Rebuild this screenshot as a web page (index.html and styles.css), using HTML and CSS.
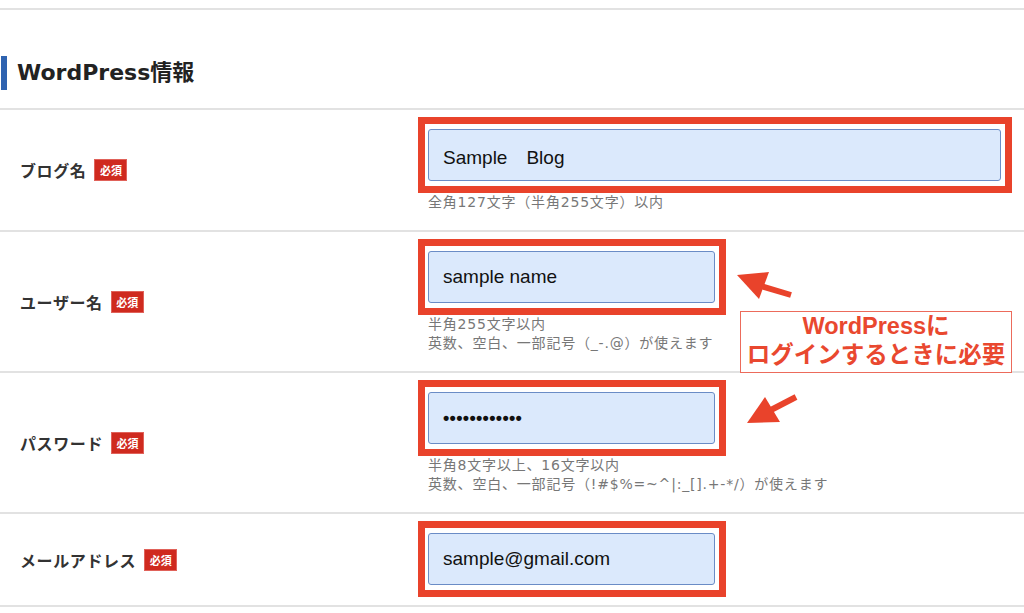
FILE: index.html
```html
<!DOCTYPE html>
<html lang="ja">
<head>
    <meta charset="UTF-8">
    <meta name="viewport" content="width=device-width, initial-scale=1.0">
    <title>WordPress情報</title>
    <link rel="stylesheet" href="styles.css">
</head>
<body>
    <div class="page">
        <div class="section-head">
            <h2>WordPress情報</h2>
        </div>

        <div class="form-table">
            <div class="row">
                <div class="label">ブログ名<span class="required">必須</span></div>
                <div class="field">
                    <div class="mark"><input class="wide" type="text" value="Sample　Blog"></div>
                    <p class="hint">全角127文字（半角255文字）以内</p>
                </div>
            </div>

            <div class="row">
                <div class="label">ユーザー名<span class="required">必須</span></div>
                <div class="field">
                    <div class="mark"><input type="text" value="sample name"></div>
                    <p class="hint">半角255文字以内<br>英数、空白、一部記号（_-.@）が使えます</p>
                </div>
            </div>

            <div class="row">
                <div class="label">パスワード<span class="required">必須</span></div>
                <div class="field">
                    <div class="mark"><input class="secret" type="password" value="abcdefghijkl"></div>
                    <p class="hint">半角8文字以上、16文字以内<br>英数、空白、一部記号（!#$%=~^|:_[].+-*/）が使えます</p>
                </div>
            </div>

            <div class="row">
                <div class="label">メールアドレス<span class="required">必須</span></div>
                <div class="field">
                    <div class="mark"><input type="text" value="sample@gmail.com"></div>
                </div>
            </div>
        </div>

        <!-- 注釈（矢印と吹き出し） -->
        <svg class="arrow arrow-up" width="70" height="40" viewBox="0 0 70 40">
            <polygon points="2,13 34,10 24,37" />
            <line x1="26" y1="24" x2="56" y2="33" />
        </svg>
        <div class="note">WordPressに<br>ログインするときに必要</div>
        <svg class="arrow arrow-down" width="70" height="40" viewBox="0 0 70 40">
            <polygon points="2,38 20,12 35,37" />
            <line x1="24" y1="26" x2="51" y2="12" />
        </svg>
    </div>
</body>
</html>
```

FILE: styles.css
```css
body {
    margin: 0;
    padding: 0;
    background-color: #ffffff;
    font-family: "Noto Sans CJK JP", sans-serif;
    color: #333333;
}

.page {
    position: relative;
    padding-top: 8px;
}

.section-head {
    border-top: 2px solid #e2e2e2;
    padding: 46px 0 18px 1px;
}

h2 {
    margin: 0;
    border-left: 6px solid #2f63b0;
    padding-left: 10px;
    height: 34px;
    line-height: 34px;
    font-family: "DejaVu Sans", "Noto Sans CJK JP", sans-serif;
    font-size: 22px;
    font-weight: bold;
    color: #222222;
}

.row {
    display: grid;
    grid-template-columns: 418px 1fr;
    border-top: 2px solid #e2e2e2;
}

.row:last-child {
    border-bottom: 2px solid #e2e2e2;
}

.label {
    display: flex;
    align-items: center;
    padding-left: 20px;
    font-size: 16px;
    font-weight: bold;
    letter-spacing: 0.6px;
    color: #333333;
}

.required {
    display: inline-block;
    margin-left: 8px;
    width: 33px;
    height: 22px;
    line-height: 21px;
    text-align: center;
    background-color: #cf2a1f;
    border: 1px solid #e0625a;
    box-sizing: border-box;
    color: #ffffff;
    font-size: 11px;
    font-weight: bold;
    letter-spacing: 0;
}

.field {
    padding: 7px 0 8px;
}

.mark {
    display: inline-block;
    border: 7px solid #e9432b;
    padding: 5px 4px 5px 3px;
}

.mark input {
    display: block;
    box-sizing: border-box;
    width: 287px;
    height: 52px;
    padding: 0 14px;
    border: 1px solid #6a8cc6;
    border-radius: 3px;
    background-color: #dbe9fc;
    font-family: "Liberation Sans", "Noto Sans CJK JP", sans-serif;
    font-size: 19px;
    color: #111111;
}

.mark input.wide {
    width: 573px;
}

.mark input.secret {
    font-size: 18px;
    font-weight: bold;
    letter-spacing: 0.3px;
}

.hint {
    margin: 0 0 10px 10px;
    font-family: "DejaVu Sans", "Noto Sans CJK JP", sans-serif;
    font-size: 14px;
    line-height: 19px;
    letter-spacing: 0.8px;
    color: #777777;
}

.note {
    position: absolute;
    left: 740px;
    top: 311px;
    width: 272px;
    height: 62px;
    box-sizing: border-box;
    border: 1px solid #ec6b5b;
    background-color: #ffffff;
    text-align: center;
    font-family: "Liberation Sans", "Noto Sans CJK JP", sans-serif;
    font-size: 23.5px;
    font-weight: bold;
    line-height: 29px;
    color: #e9482f;
    white-space: nowrap;
}

.arrow {
    position: absolute;
}

.arrow polygon {
    fill: #e9432b;
}

.arrow line {
    stroke: #e9432b;
    stroke-width: 6;
}

.arrow-up {
    left: 735px;
    top: 262px;
}

.arrow-down {
    left: 745px;
    top: 385px;
}
```
